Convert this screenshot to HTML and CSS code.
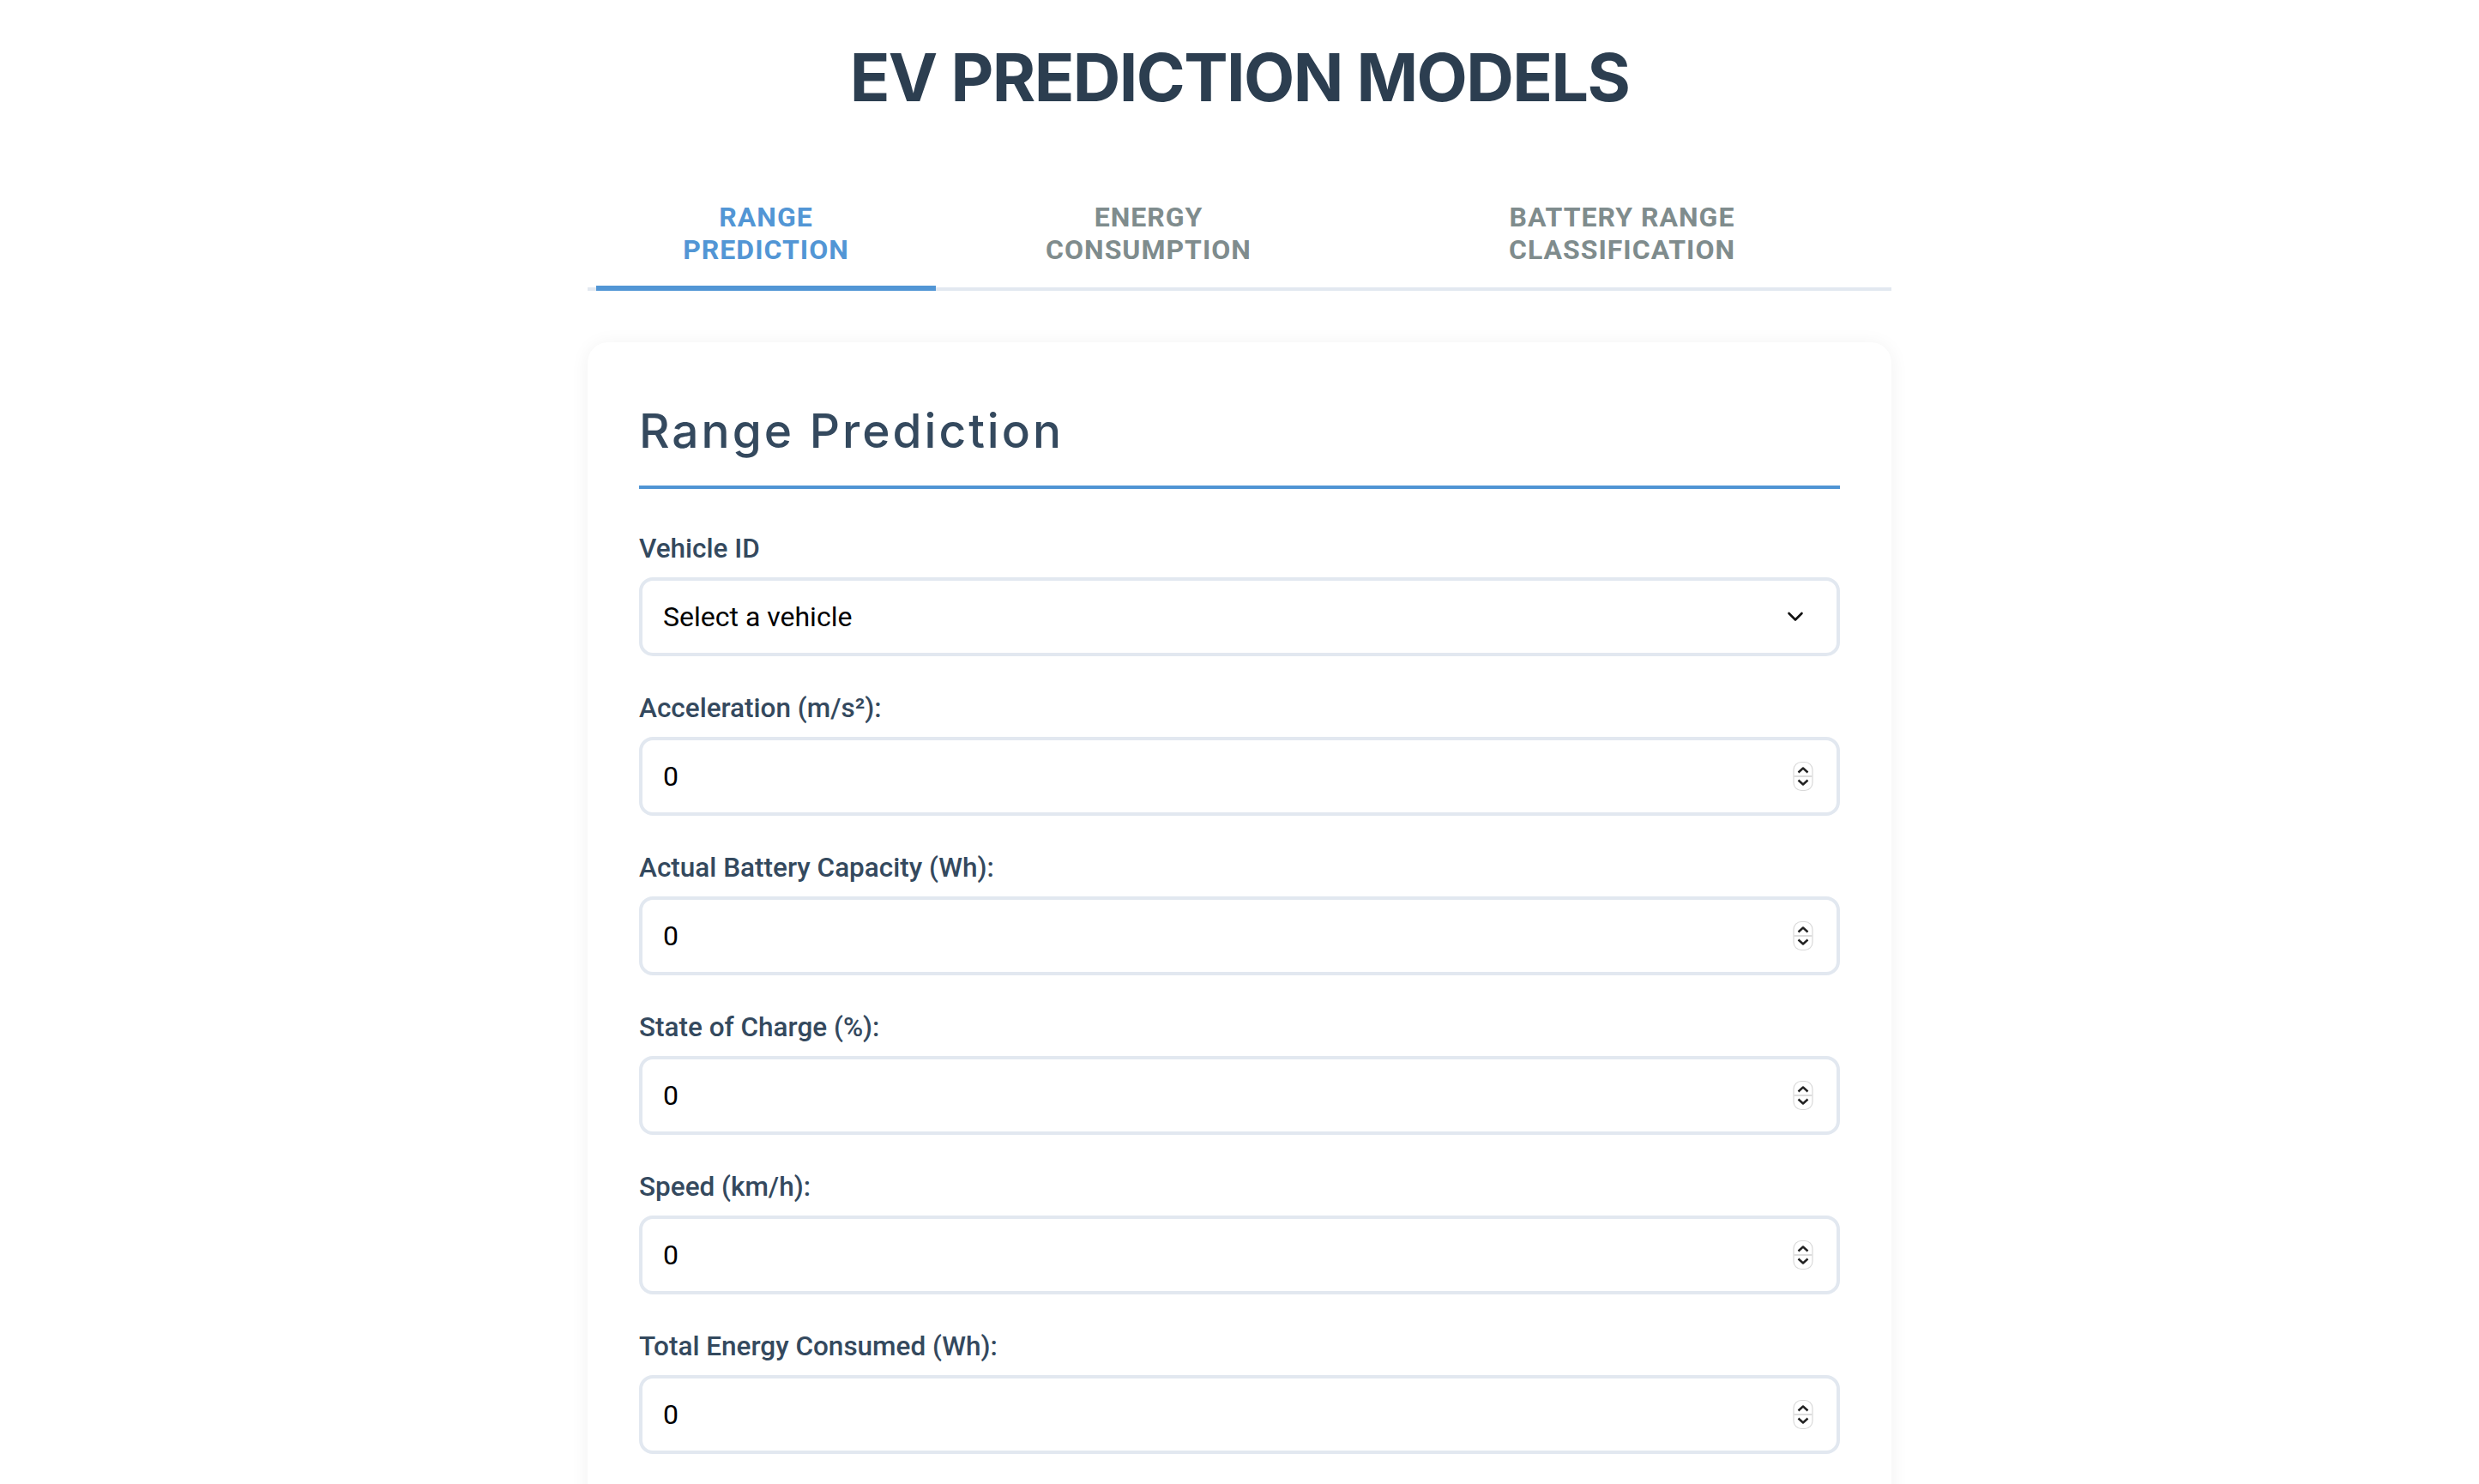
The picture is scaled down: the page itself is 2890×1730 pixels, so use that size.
FILE: index.html
```html
<!DOCTYPE html>
<html lang="en">
<head>
<meta charset="utf-8">
<title>EV Prediction Models</title>
<link rel="stylesheet" href="styles.css">
</head>
<body>
<div class="page">
  <h1 class="title">EV PREDICTION MODELS</h1>

  <nav class="tabs">
    <button class="tab tab-active">Range<br>Prediction</button>
    <button class="tab">Energy<br>Consumption</button>
    <button class="tab">Battery Range<br>Classification</button>
  </nav>

  <section class="card">
    <h2 class="card-title">Range Prediction</h2>
    <form class="form">
      <div class="field">
        <label class="field-label" for="vehicle">Vehicle ID</label>
        <div class="control">
          <select id="vehicle" class="input select">
            <option>Select a vehicle</option>
          </select>
          <svg class="chevron" width="20" height="12" viewBox="0 0 20 12"><polyline points="2.5,2 10,9.5 17.5,2" fill="none" stroke="#111" stroke-width="2.6" stroke-linecap="round" stroke-linejoin="round"/></svg>
        </div>
      </div>

      <div class="field">
        <label class="field-label" for="acc">Acceleration (m/s²):</label>
        <div class="control">
          <input id="acc" class="input" type="number" value="0">
          <svg class="spinner" width="24" height="35" viewBox="0 0 24 35"><rect x="1" y="1" width="22" height="33" rx="9" fill="#fff" stroke="#d9d9d9" stroke-width="1.2"/><line x1="1.5" y1="17.5" x2="22.5" y2="17.5" stroke="#dcdcdc" stroke-width="2"/><polyline points="6.5,13 12,8 17.5,13" fill="none" stroke="#222" stroke-width="2.4" stroke-linejoin="round"/><polyline points="6.5,22 12,27 17.5,22" fill="none" stroke="#222" stroke-width="2.4" stroke-linejoin="round"/></svg>
        </div>
      </div>

      <div class="field">
        <label class="field-label" for="cap">Actual Battery Capacity (Wh):</label>
        <div class="control">
          <input id="cap" class="input" type="number" value="0">
          <svg class="spinner" width="24" height="35" viewBox="0 0 24 35"><rect x="1" y="1" width="22" height="33" rx="9" fill="#fff" stroke="#d9d9d9" stroke-width="1.2"/><line x1="1.5" y1="17.5" x2="22.5" y2="17.5" stroke="#dcdcdc" stroke-width="2"/><polyline points="6.5,13 12,8 17.5,13" fill="none" stroke="#222" stroke-width="2.4" stroke-linejoin="round"/><polyline points="6.5,22 12,27 17.5,22" fill="none" stroke="#222" stroke-width="2.4" stroke-linejoin="round"/></svg>
        </div>
      </div>

      <div class="field">
        <label class="field-label" for="soc">State of Charge (%):</label>
        <div class="control">
          <input id="soc" class="input" type="number" value="0">
          <svg class="spinner" width="24" height="35" viewBox="0 0 24 35"><rect x="1" y="1" width="22" height="33" rx="9" fill="#fff" stroke="#d9d9d9" stroke-width="1.2"/><line x1="1.5" y1="17.5" x2="22.5" y2="17.5" stroke="#dcdcdc" stroke-width="2"/><polyline points="6.5,13 12,8 17.5,13" fill="none" stroke="#222" stroke-width="2.4" stroke-linejoin="round"/><polyline points="6.5,22 12,27 17.5,22" fill="none" stroke="#222" stroke-width="2.4" stroke-linejoin="round"/></svg>
        </div>
      </div>

      <div class="field">
        <label class="field-label" for="speed">Speed (km/h):</label>
        <div class="control">
          <input id="speed" class="input" type="number" value="0">
          <svg class="spinner" width="24" height="35" viewBox="0 0 24 35"><rect x="1" y="1" width="22" height="33" rx="9" fill="#fff" stroke="#d9d9d9" stroke-width="1.2"/><line x1="1.5" y1="17.5" x2="22.5" y2="17.5" stroke="#dcdcdc" stroke-width="2"/><polyline points="6.5,13 12,8 17.5,13" fill="none" stroke="#222" stroke-width="2.4" stroke-linejoin="round"/><polyline points="6.5,22 12,27 17.5,22" fill="none" stroke="#222" stroke-width="2.4" stroke-linejoin="round"/></svg>
        </div>
      </div>

      <div class="field">
        <label class="field-label" for="energy">Total Energy Consumed (Wh):</label>
        <div class="control">
          <input id="energy" class="input" type="number" value="0">
          <svg class="spinner" width="24" height="35" viewBox="0 0 24 35"><rect x="1" y="1" width="22" height="33" rx="9" fill="#fff" stroke="#d9d9d9" stroke-width="1.2"/><line x1="1.5" y1="17.5" x2="22.5" y2="17.5" stroke="#dcdcdc" stroke-width="2"/><polyline points="6.5,13 12,8 17.5,13" fill="none" stroke="#222" stroke-width="2.4" stroke-linejoin="round"/><polyline points="6.5,22 12,27 17.5,22" fill="none" stroke="#222" stroke-width="2.4" stroke-linejoin="round"/></svg>
        </div>
      </div>
    </form>
  </section>
</div>
</body>
</html>
```

FILE: styles.css
```css
* {
  box-sizing: border-box;
}

body {
  margin: 0;
  background: #ffffff;
  font-family: Roboto, "Liberation Sans", Arial, sans-serif;
  color: #34495e;
}

.page {
  width: 1520px;
  margin: 0 auto;
  padding-top: 42px;
}

.title {
  margin: 0;
  font-family: Inter, "Noto Sans", sans-serif;
  font-weight: 700;
  font-size: 77px;
  line-height: 96px;
  letter-spacing: -1.6px;
  text-align: center;
  color: #2c3e50;
}

.tabs {
  display: grid;
  grid-template-columns: 396px 456px 608px;
  column-gap: 20px;
  padding: 0 10px;
  margin-top: 72px;
  border-bottom: 4px solid #e2e8f0;
}

.tab {
  position: relative;
  padding: 24px 40px 25px;
  border: 0;
  background: none;
  font-family: Roboto, "Liberation Sans", sans-serif;
  font-weight: 700;
  font-size: 32px;
  line-height: 38px;
  letter-spacing: 1px;
  text-transform: uppercase;
  text-align: center;
  color: #7f8c8d;
  cursor: pointer;
}

.tab-active {
  color: #5296d5;
}

.tab-active::after {
  content: "";
  position: absolute;
  left: 0;
  right: 0;
  bottom: -4px;
  height: 6px;
  background: #5296d5;
}

.card {
  margin-top: 60px;
  padding: 60px 60px 80px;
  background: #fff;
  border-radius: 24px;
  box-shadow: 0 2px 22px rgba(0, 0, 0, 0.06);
}

.card-title {
  margin: 0 0 52px;
  padding-bottom: 21px;
  border-bottom: 4px solid #4f94d4;
  font-family: Inter, "Noto Sans", sans-serif;
  font-weight: 500;
  font-size: 55px;
  line-height: 86px;
  letter-spacing: 3px;
  color: #34495e;
}

.form {
  display: flex;
  flex-direction: column;
}

.field {
  margin-bottom: 43px;
}

.field-label {
  display: block;
  margin-bottom: 15px;
  font-family: Roboto, "Liberation Sans", sans-serif;
  font-weight: 500;
  font-size: 31.5px;
  line-height: 36px;
  color: #34495e;
}

.control {
  position: relative;
}

.input {
  display: block;
  width: 100%;
  height: 92px;
  padding: 0 24px;
  border: 4px solid #e2e8f0;
  border-radius: 16px;
  background: #fff;
  font-family: Roboto, "Liberation Sans", sans-serif;
  font-size: 32px;
  color: #000;
  outline: none;
  -webkit-appearance: none;
  appearance: none;
}

.input::-webkit-inner-spin-button,
.input::-webkit-outer-spin-button {
  -webkit-appearance: none;
  margin: 0;
}

.select {
  cursor: pointer;
}

.chevron {
  position: absolute;
  right: 42px;
  top: 50%;
  transform: translateY(-50%);
  pointer-events: none;
}

.spinner {
  position: absolute;
  right: 31px;
  top: 50%;
  transform: translateY(-50%);
  pointer-events: none;
}
```
